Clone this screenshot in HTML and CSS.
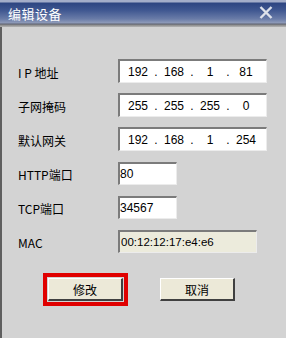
FILE: index.html
```html
<!DOCTYPE html>
<html>
<head>
    <title>编辑设备</title>
    <link rel="stylesheet" href="styles.css">
</head>
<body>
    <div class="window">
        <div class="titlebar">
            <span class="title">编辑设备</span>
            <svg class="close" width="14" height="13" viewBox="0 0 14 13">
                <path d="M1.5 1 L12.5 12 M12.5 1 L1.5 12" stroke="#dde1ea" stroke-width="2.4" fill="none"/>
            </svg>
        </div>
        <div class="content">
            <form class="fields">
                <label class="lbl">I P 地址</label>
                <div class="box ip">
                    <span class="oct">192</span><span class="dot">.</span>
                    <span class="oct">168</span><span class="dot">.</span>
                    <span class="oct">1</span><span class="dot">.</span>
                    <span class="oct">81</span>
                </div>

                <label class="lbl">子网掩码</label>
                <div class="box ip">
                    <span class="oct">255</span><span class="dot">.</span>
                    <span class="oct">255</span><span class="dot">.</span>
                    <span class="oct">255</span><span class="dot">.</span>
                    <span class="oct">0</span>
                </div>

                <label class="lbl">默认网关</label>
                <div class="box ip">
                    <span class="oct">192</span><span class="dot">.</span>
                    <span class="oct">168</span><span class="dot">.</span>
                    <span class="oct">1</span><span class="dot">.</span>
                    <span class="oct">254</span>
                </div>

                <label class="lbl">HTTP端口</label>
                <div class="box port">80</div>

                <label class="lbl">TCP端口</label>
                <div class="box port">34567</div>

                <label class="lbl">MAC</label>
                <div class="box mac">00:12:12:17:e4:e6</div>
            </form>

            <div class="buttons">
                <div class="focus">
                    <button class="btn" type="button">修改</button>
                </div>
                <button class="btn" type="button">取消</button>
            </div>
        </div>
    </div>
</body>
</html>
```

FILE: styles.css
```css
body {
    margin: 0;
    font-family: 'Liberation Sans', 'Noto Sans CJK SC', sans-serif;
    font-size: 12px;
    color: #000;
    background-color: #d3d3d3;
}

.window {
    width: 286px;
    height: 338px;
    display: flex;
    flex-direction: column;
    overflow: hidden;
}

.titlebar {
    height: 27px;
    flex-shrink: 0;
    display: flex;
    align-items: center;
    justify-content: space-between;
    padding: 0 13px 2px 8px;
    box-sizing: border-box;
    background: linear-gradient(#a3adc9 0, #a3adc9 2px, #2d4581 3px, #3e5690 10px, #6a7ca8 19px, #8f9bb9 23px, #5d6170 24px, #8a8a8a 25px, #b4b4b4 27px);
}

.title {
    color: #fff;
    font-family: 'Noto Sans CJK SC', sans-serif;
    font-size: 13px;
    letter-spacing: 0.5px;
    margin-top: 1px;
}

.content {
    flex: 1;
    border-left: 2px solid #5f5f5f;
    padding: 32px 0 0 16px;
}

.fields {
    display: grid;
    grid-template-columns: 100px auto;
    grid-auto-rows: 24px;
    row-gap: 10px;
    align-items: center;
    margin: 0;
}

.lbl {
    font-family: 'Noto Sans CJK SC', sans-serif;
    font-size: 12px;
    padding-top: 2px;
}

.box {
    box-sizing: border-box;
    background-color: #fff;
    border-top: 2px solid #7b7b7b;
    border-left: 2px solid #7b7b7b;
    border-right: 1px solid #ececec;
    border-bottom: 1px solid #ececec;
    display: flex;
    align-items: center;
}

.ip {
    width: 149px;
    height: 24px;
    padding-left: 3px;
}

.oct {
    width: 30px;
    text-align: center;
}

.dot {
    width: 6px;
    text-align: center;
}

.port {
    width: 59px;
    height: 23px;
    padding-left: 0;
}

.mac {
    width: 139px;
    height: 23px;
    background-color: #ecebdc;
    font-size: 11.5px;
    padding-left: 1px;
}

.buttons {
    display: flex;
    align-items: center;
    gap: 32px;
    margin: 20px 0 0 25px;
}

.focus {
    border: 4px solid #e00000;
    padding: 1px;
}

.btn {
    width: 75px;
    height: 23px;
    font-family: 'Noto Sans CJK SC', sans-serif;
    font-size: 12px;
    color: #000;
    background-color: #ece9d8;
    border-top: 1px solid #fff;
    border-left: 1px solid #fff;
    border-right: 2px solid #404040;
    border-bottom: 2px solid #404040;
    padding: 0;
    cursor: pointer;
}
```
